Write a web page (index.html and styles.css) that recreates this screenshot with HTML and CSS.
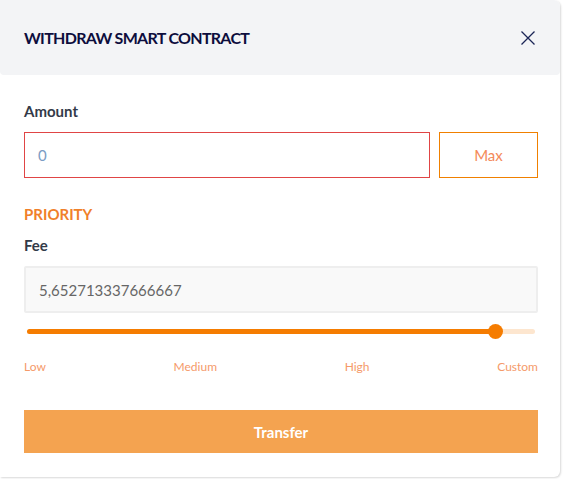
FILE: index.html
```html
<!DOCTYPE html>
<html>
<head>
<meta charset="utf-8">
<link rel="stylesheet" href="styles.css">
</head>
<body>
<div class="modal">
  <div class="header">
    <h1 class="title">WITHDRAW SMART CONTRACT</h1>
    <svg class="close" width="14" height="14" viewBox="0 0 14 14"><path d="M0.5 0.5 L13.5 13.5 M13.5 0.5 L0.5 13.5" stroke="#1b2556" stroke-width="1.3" fill="none"/></svg>
  </div>
  <div class="body">
    <div class="label">Amount</div>
    <div class="amount-row">
      <div class="input amount">0</div>
      <div class="max">Max</div>
    </div>
    <div class="priority">PRIORITY</div>
    <div class="label fee-label">Fee</div>
    <div class="input fee">5,652713337666667</div>
    <div class="slider">
      <div class="track"></div>
      <div class="fill" style="width: 92.5%"></div>
      <div class="thumb" style="left: 92.5%"></div>
    </div>
    <div class="marks">
      <span>Low</span><span>Medium</span><span>High</span><span>Custom</span>
    </div>
    <button class="transfer">Transfer</button>
  </div>
</div>
</body>
</html>
```
FILE: styles.css
```css
html, body {
  margin: 0;
  padding: 0;
  background: #ffffff;
}
body {
  font-family: Lato, "Noto Sans", sans-serif;
  width: 563px;
  height: 479px;
}
.modal {
  width: 560px;
  height: 477px;
  background: #fff;
  border-radius: 0 6px 6px 0;
  box-shadow: 1px 1px 2px rgba(0,0,0,0.15);
  overflow: hidden;
}
.header {
  height: 75px;
  background: #f3f4f6;
  border-radius: 0 0 4px 4px;
  display: flex;
  align-items: center;
  justify-content: space-between;
  padding: 0 25px 0 24px;
}
.title {
  margin: 0;
  font-size: 16px;
  font-weight: 700;
  color: #0d0d3d;
  letter-spacing: -0.7px;
}
.close {
  display: block;
  margin-top: 0;
}
.body {
  padding: 26px 22px 0 24px;
  display: flex;
  flex-direction: column;
}
.label {
  font-size: 15px;
  font-weight: 700;
  color: #333a48;
  line-height: 20px;
}
.amount-row {
  display: flex;
  gap: 9px;
  margin-top: 11px;
}
.input {
  box-sizing: border-box;
  height: 46px;
  display: flex;
  align-items: center;
  padding-left: 13px;
  font-size: 15px;
}
.amount {
  flex: 1;
  border: 1px solid #e04545;
  color: #7b9cc4;
}
.max {
  box-sizing: border-box;
  width: 99px;
  height: 46px;
  border: 1px solid #f08000;
  color: #f48a5a;
  font-size: 15px;
  display: flex;
  align-items: center;
  justify-content: center;
}
.priority {
  margin-top: 26px;
  font-size: 15px;
  font-weight: 700;
  color: #f0802a;
  line-height: 20px;
}
.fee-label {
  margin-top: 11px;
}
.fee {
  margin-top: 11px;
  background: #f9f9f9;
  border: 2px solid #eeeeee;
  border-radius: 2px;
  color: #666;
  height: 47px;
}
.slider {
  position: relative;
  margin: 15px 3px 0 3px;
  height: 8px;
}
.track {
  position: absolute;
  left: 0;
  right: 0;
  top: 1px;
  height: 5px;
  border-radius: 3px;
  background: #fde6cf;
}
.fill {
  position: absolute;
  left: 0;
  top: 1px;
  height: 5px;
  border-radius: 3px;
  background: #f57c00;
}
.thumb {
  position: absolute;
  top: -4px;
  width: 15px;
  height: 15px;
  margin-left: -9px;
  border-radius: 50%;
  background: #f57c00;
}
.marks {
  display: flex;
  justify-content: space-between;
  margin-top: 23px;
  font-size: 12px;
  color: #f59a6a;
  line-height: 16px;
}
.transfer {
  margin-top: 35px;
  height: 43px;
  border: none;
  background: #f4a350;
  color: #fff;
  font-family: inherit;
  font-size: 15px;
  font-weight: 700;
  cursor: pointer;
}
```
